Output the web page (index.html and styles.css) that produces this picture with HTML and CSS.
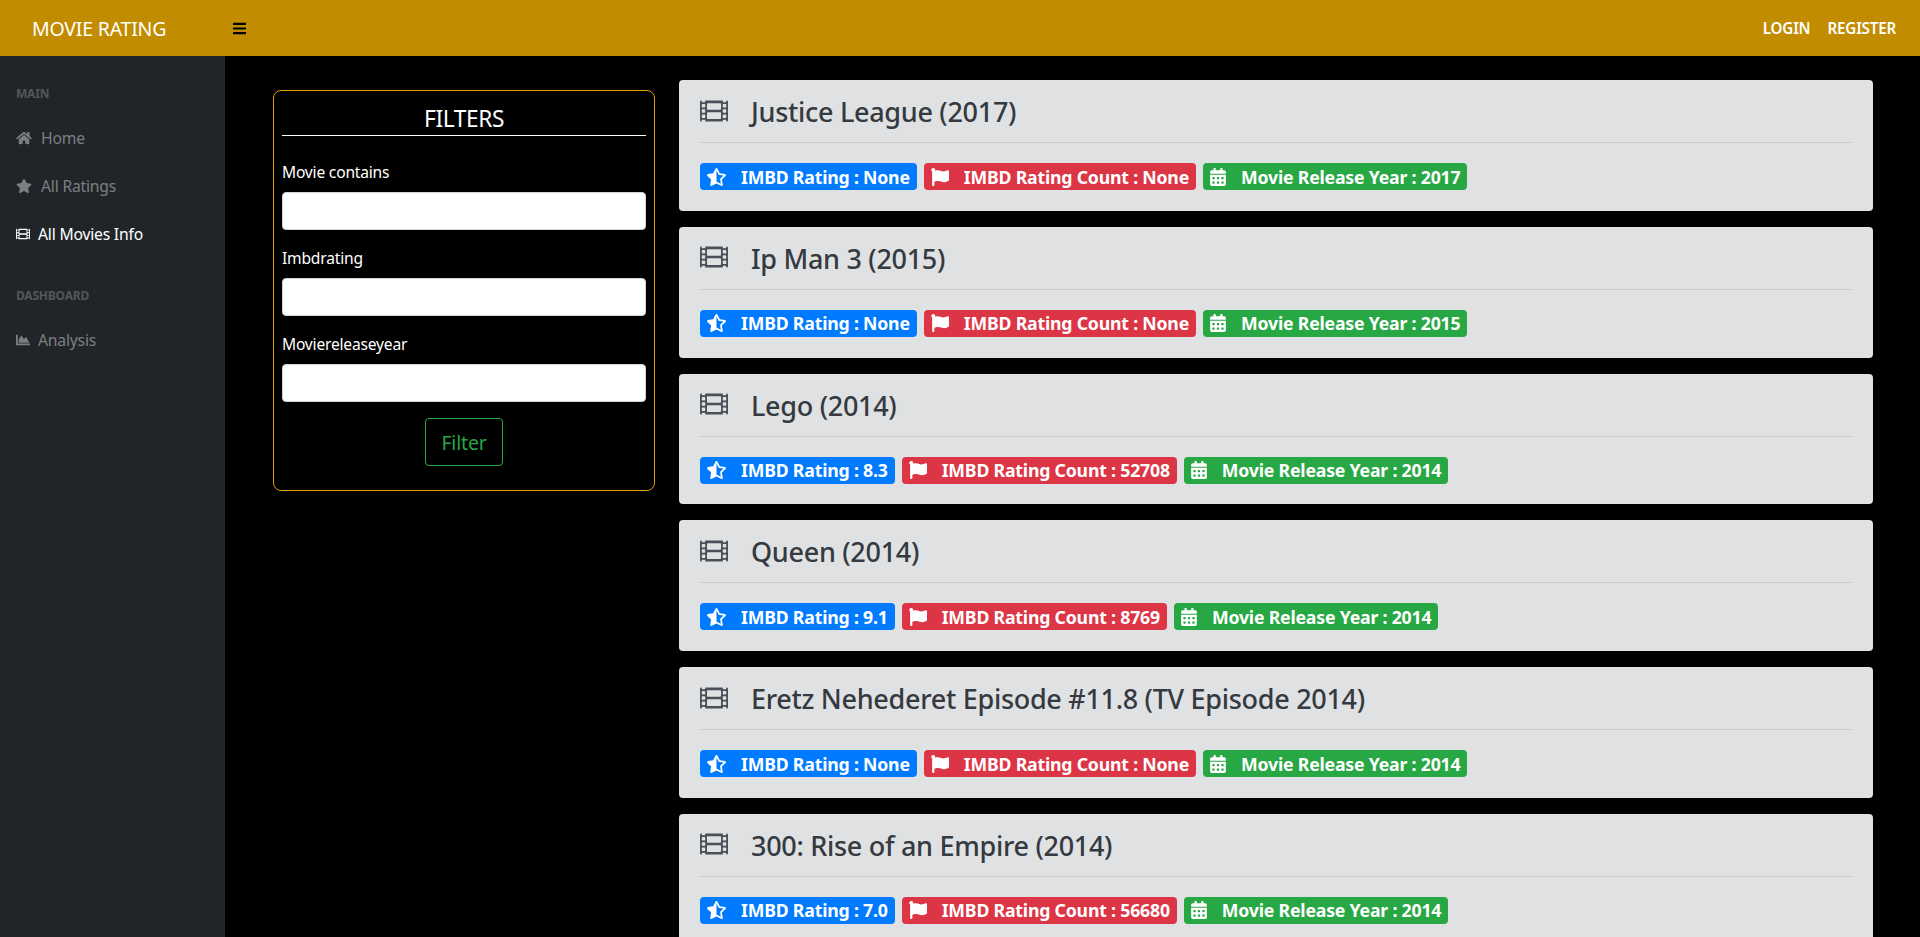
FILE: index.html
```html
<!DOCTYPE html>
<html lang="en">
<head>
    <meta charset="UTF-8">
    <meta name="viewport" content="width=device-width, initial-scale=1.0">
    <title>Movie Rating</title>
    <link rel="stylesheet" href="styles.css">
</head>
<body>

    <svg class="sprites" xmlns="http://www.w3.org/2000/svg">
        <symbol id="i-bars" viewBox="0 0 448 512"><path d="M16 132h416c8.837 0 16-7.163 16-16V76c0-8.837-7.163-16-16-16H16C7.163 60 0 67.163 0 76v40c0 8.837 7.163 16 16 16zm0 160h416c8.837 0 16-7.163 16-16v-40c0-8.837-7.163-16-16-16H16c-8.837 0-16 7.163-16 16v40c0 8.837 7.163 16 16 16zm0 160h416c8.837 0 16-7.163 16-16v-40c0-8.837-7.163-16-16-16H16c-8.837 0-16 7.163-16 16v40c0 8.837 7.163 16 16 16z"/></symbol>
        <symbol id="i-home" viewBox="0 0 576 512"><path d="M280.37 148.26L96 300.11V464a16 16 0 0 0 16 16l112.06-.29a16 16 0 0 0 15.92-16V368a16 16 0 0 1 16-16h64a16 16 0 0 1 16 16v95.64a16 16 0 0 0 16 16.05L464 480a16 16 0 0 0 16-16V300L295.67 148.26a12.19 12.19 0 0 0-15.3 0zM571.6 251.47L488 182.56V44.05a12 12 0 0 0-12-12h-56a12 12 0 0 0-12 12v72.61L318.47 43a48 48 0 0 0-61 0L4.34 251.47a12 12 0 0 0-1.6 16.9l25.5 31A12 12 0 0 0 45.15 301l235.22-193.74a12.19 12.19 0 0 1 15.3 0L530.9 301a12 12 0 0 0 16.9-1.6l25.5-31a12 12 0 0 0-1.7-16.93z"/></symbol>
        <symbol id="i-star" viewBox="0 0 576 512"><path d="M259.3 17.8L194 150.2 47.9 171.5c-26.2 3.8-36.7 36.1-17.7 54.6l105.7 103-25 145.5c-4.5 26.3 23.2 46 46.4 33.7L288 439.6l130.7 68.7c23.2 12.2 50.9-7.4 46.4-33.7l-25-145.5 105.7-103c19-18.5 8.5-50.8-17.7-54.6L382 150.2 316.7 17.8c-11.7-23.6-45.6-23.9-57.4 0z"/></symbol>
        <symbol id="i-film" viewBox="0 0 512 512"><path d="M488 64h-8v20c0 6.6-5.4 12-12 12h-40c-6.6 0-12-5.4-12-12V64H96v20c0 6.6-5.4 12-12 12H44c-6.6 0-12-5.4-12-12V64h-8C10.7 64 0 74.7 0 88v336c0 13.3 10.7 24 24 24h8v-20c0-6.6 5.4-12 12-12h40c6.6 0 12 5.4 12 12v20h320v-20c0-6.6 5.4-12 12-12h40c6.6 0 12 5.4 12 12v20h8c13.3 0 24-10.7 24-24V88c0-13.3-10.7-24-24-24zM96 372c0 6.6-5.4 12-12 12H44c-6.6 0-12-5.4-12-12v-40c0-6.6 5.4-12 12-12h40c6.6 0 12 5.4 12 12v40zm0-96c0 6.6-5.4 12-12 12H44c-6.6 0-12-5.4-12-12v-40c0-6.6 5.4-12 12-12h40c6.6 0 12 5.4 12 12v40zm0-96c0 6.6-5.4 12-12 12H44c-6.6 0-12-5.4-12-12v-40c0-6.6 5.4-12 12-12h40c6.6 0 12 5.4 12 12v40zm288 208c0 6.6-5.4 12-12 12H140c-6.6 0-12-5.4-12-12v-96c0-6.6 5.4-12 12-12h232c6.6 0 12 5.4 12 12v96zm0-168c0 6.6-5.4 12-12 12H140c-6.6 0-12-5.4-12-12v-96c0-6.6 5.4-12 12-12h232c6.6 0 12 5.4 12 12v96zm96 152c0 6.6-5.4 12-12 12h-40c-6.6 0-12-5.4-12-12v-40c0-6.6 5.4-12 12-12h40c6.6 0 12 5.4 12 12v40zm0-96c0 6.6-5.4 12-12 12h-40c-6.6 0-12-5.4-12-12v-40c0-6.6 5.4-12 12-12h40c6.6 0 12 5.4 12 12v40zm0-96c0 6.6-5.4 12-12 12h-40c-6.6 0-12-5.4-12-12v-40c0-6.6 5.4-12 12-12h40c6.6 0 12 5.4 12 12v40z"/></symbol>
        <symbol id="i-chart" viewBox="0 0 512 512"><path d="M500 384c6.6 0 12 5.4 12 12v40c0 6.6-5.4 12-12 12H12c-6.6 0-12-5.4-12-12V76c0-6.6 5.4-12 12-12h40c6.6 0 12 5.4 12 12v308h436zM372.7 159.5L288 216l-85.3-113.7c-5.1-6.8-15.5-6.3-19.9 1L96 248v104h384l-89.9-187.8c-3.2-6.5-11.4-8.7-17.4-4.7z"/></symbol>
        <symbol id="i-star-half" viewBox="0 0 536 512"><path d="M508.55 171.51L362.18 150.2 296.77 17.81C290.89 5.98 279.42 0 267.95 0c-11.4 0-22.79 5.9-28.69 17.81l-65.43 132.38-146.38 21.29c-26.25 3.8-36.77 36.09-17.74 54.59l105.89 103-25.06 145.48C86.98 495.33 103.57 512 122.15 512c4.93 0 10-1.17 14.87-3.75l130.95-68.68 130.94 68.7c4.86 2.55 9.92 3.71 14.83 3.71 18.6 0 35.22-16.61 31.66-37.4l-25.03-145.49 105.91-102.98c19.04-18.5 8.52-50.8-17.73-54.6zm-121.74 123.2l-18.12 17.62 4.28 24.88 19.52 113.45-102.13-53.59-22.38-11.74.03-317.19 51.03 103.29 11.18 22.63 25.01 3.64 114.23 16.63-82.65 80.38z"/></symbol>
        <symbol id="i-flag" viewBox="0 0 512 512"><path d="M349.565 98.783C295.978 98.783 251.721 64 184.348 64c-24.955 0-47.309 4.384-68.045 12.013a55.947 55.947 0 0 0 3.586-23.562C118.117 24.015 94.806 1.206 66.338.048 34.345-1.254 8 24.296 8 56c0 19.026 9.497 35.825 24 45.945V488c0 13.255 10.745 24 24 24h16c13.255 0 24-10.745 24-24v-94.4c28.311-12.064 63.582-22.122 114.435-22.122 53.588 0 97.844 34.783 165.217 34.783 48.169 0 86.667-16.294 122.505-40.858C506.84 359.452 512 349.571 512 339.045v-243.1c0-23.393-24.269-38.87-45.485-29.016-34.338 15.948-76.454 31.854-116.95 31.854z"/></symbol>
        <symbol id="i-calendar" viewBox="0 0 448 512"><path d="M0 464c0 26.5 21.5 48 48 48h352c26.5 0 48-21.5 48-48V192H0v272zm320-196c0-6.6 5.4-12 12-12h40c6.6 0 12 5.4 12 12v40c0 6.6-5.4 12-12 12h-40c-6.6 0-12-5.4-12-12v-40zm0 128c0-6.6 5.4-12 12-12h40c6.6 0 12 5.4 12 12v40c0 6.6-5.4 12-12 12h-40c-6.6 0-12-5.4-12-12v-40zM192 268c0-6.6 5.4-12 12-12h40c6.6 0 12 5.4 12 12v40c0 6.6-5.4 12-12 12h-40c-6.6 0-12-5.4-12-12v-40zm0 128c0-6.6 5.4-12 12-12h40c6.6 0 12 5.4 12 12v40c0 6.6-5.4 12-12 12h-40c-6.6 0-12-5.4-12-12v-40zM64 268c0-6.6 5.4-12 12-12h40c6.6 0 12 5.4 12 12v40c0 6.6-5.4 12-12 12H76c-6.6 0-12-5.4-12-12v-40zm0 128c0-6.6 5.4-12 12-12h40c6.6 0 12 5.4 12 12v40c0 6.6-5.4 12-12 12H76c-6.6 0-12-5.4-12-12v-40zM400 64h-48V16c0-8.8-7.2-16-16-16h-32c-8.8 0-16 7.2-16 16v48H160V16c0-8.8-7.2-16-16-16h-32c-8.8 0-16 7.2-16 16v48H48C21.5 64 0 85.5 0 112v48h448v-48c0-26.5-21.5-48-48-48z"/></symbol>
    </svg>

    <header class="topbar">
        <a class="brand" href="#">MOVIE RATING</a>
        <button class="toggle" type="button" aria-label="Toggle sidebar"><svg class="icon"><use href="#i-bars"/></svg></button>
        <nav class="topnav">
            <a href="#">LOGIN</a>
            <a href="#">REGISTER</a>
        </nav>
    </header>

    <div class="layout">
        <aside class="sidebar">
            <div class="side-heading">MAIN</div>
            <a class="side-link" href="#"><svg class="icon wide"><use href="#i-home"/></svg>Home</a>
            <a class="side-link" href="#"><svg class="icon wide"><use href="#i-star"/></svg>All Ratings</a>
            <a class="side-link active" href="#"><svg class="icon"><use href="#i-film"/></svg>All Movies Info</a>
            <div class="side-heading second">DASHBOARD</div>
            <a class="side-link" href="#"><svg class="icon"><use href="#i-chart"/></svg>Analysis</a>
        </aside>

        <main class="content">
            <div class="filters-col">
                <form class="filters">
                    <h4>FILTERS</h4>
                    <label for="movie">Movie contains</label>
                    <input id="movie" type="text">
                    <label for="imdb">Imbdrating</label>
                    <input id="imdb" type="text">
                    <label for="year">Moviereleaseyear</label>
                    <input id="year" type="text">
                    <button class="filter-btn" type="button">Filter</button>
                </form>
            </div>

            <div class="movies">
                <div class="movie">
                    <h3><svg class="icon"><use href="#i-film"/></svg><span>Justice League (2017)</span></h3>
                    <hr>
                    <div class="badges">
                        <span class="badge blue"><svg class="icon"><use href="#i-star-half"/></svg>IMBD Rating : None</span>
                        <span class="badge red"><svg class="icon"><use href="#i-flag"/></svg>IMBD Rating Count : None</span>
                        <span class="badge green"><svg class="icon"><use href="#i-calendar"/></svg>Movie Release Year : 2017</span>
                    </div>
                </div>
                <div class="movie">
                    <h3><svg class="icon"><use href="#i-film"/></svg><span>Ip Man 3 (2015)</span></h3>
                    <hr>
                    <div class="badges">
                        <span class="badge blue"><svg class="icon"><use href="#i-star-half"/></svg>IMBD Rating : None</span>
                        <span class="badge red"><svg class="icon"><use href="#i-flag"/></svg>IMBD Rating Count : None</span>
                        <span class="badge green"><svg class="icon"><use href="#i-calendar"/></svg>Movie Release Year : 2015</span>
                    </div>
                </div>
                <div class="movie">
                    <h3><svg class="icon"><use href="#i-film"/></svg><span>Lego (2014)</span></h3>
                    <hr>
                    <div class="badges">
                        <span class="badge blue"><svg class="icon"><use href="#i-star-half"/></svg>IMBD Rating : 8.3</span>
                        <span class="badge red"><svg class="icon"><use href="#i-flag"/></svg>IMBD Rating Count : 52708</span>
                        <span class="badge green"><svg class="icon"><use href="#i-calendar"/></svg>Movie Release Year : 2014</span>
                    </div>
                </div>
                <div class="movie">
                    <h3><svg class="icon"><use href="#i-film"/></svg><span>Queen (2014)</span></h3>
                    <hr>
                    <div class="badges">
                        <span class="badge blue"><svg class="icon"><use href="#i-star-half"/></svg>IMBD Rating : 9.1</span>
                        <span class="badge red"><svg class="icon"><use href="#i-flag"/></svg>IMBD Rating Count : 8769</span>
                        <span class="badge green"><svg class="icon"><use href="#i-calendar"/></svg>Movie Release Year : 2014</span>
                    </div>
                </div>
                <div class="movie">
                    <h3><svg class="icon"><use href="#i-film"/></svg><span>Eretz Nehederet Episode #11.8 (TV Episode 2014)</span></h3>
                    <hr>
                    <div class="badges">
                        <span class="badge blue"><svg class="icon"><use href="#i-star-half"/></svg>IMBD Rating : None</span>
                        <span class="badge red"><svg class="icon"><use href="#i-flag"/></svg>IMBD Rating Count : None</span>
                        <span class="badge green"><svg class="icon"><use href="#i-calendar"/></svg>Movie Release Year : 2014</span>
                    </div>
                </div>
                <div class="movie">
                    <h3><svg class="icon"><use href="#i-film"/></svg><span>300: Rise of an Empire (2014)</span></h3>
                    <hr>
                    <div class="badges">
                        <span class="badge blue"><svg class="icon"><use href="#i-star-half"/></svg>IMBD Rating : 7.0</span>
                        <span class="badge red"><svg class="icon"><use href="#i-flag"/></svg>IMBD Rating Count : 56680</span>
                        <span class="badge green"><svg class="icon"><use href="#i-calendar"/></svg>Movie Release Year : 2014</span>
                    </div>
                </div>
            </div>
        </main>
    </div>

</body>
</html>
```

FILE: styles.css
```css
* {
    box-sizing: border-box;
}

html, body {
    height: 100%;
}

body {
    margin: 0;
    display: flex;
    flex-direction: column;
    overflow: hidden;
    background-color: #000;
    color: #fff;
    font-family: "Noto Sans", "Open Sans", sans-serif;
    font-size: 15px;
}

a {
    text-decoration: none;
    color: inherit;
}

.sprites {
    display: none;
}

.icon {
    display: block;
    flex: none;
    fill: currentColor;
}

/* top bar */
.topbar {
    flex: none;
    height: 56px;
    display: flex;
    align-items: center;
    background-color: #c28c00;
}

.brand {
    width: 225px;
    padding-left: 32px;
    font-size: 19.5px;
    letter-spacing: -0.2px;
}

.toggle {
    padding: 0;
    margin-left: 8px;
    border: none;
    background: none;
    color: #000;
}

.toggle .icon {
    width: 13px;
    height: 15px;
}

.topnav {
    margin-left: auto;
    padding-right: 24px;
    display: flex;
    gap: 17px;
    font-size: 15.2px;
    font-weight: 600;
    letter-spacing: -0.2px;
}

/* sidebar */
.layout {
    flex: 1;
    display: flex;
    min-height: 0;
}

.sidebar {
    flex: none;
    width: 225px;
    padding: 30px 16px 0;
    background-color: #212529;
    color: #7c7f82;
}

.side-heading {
    height: 16px;
    line-height: 16px;
    font-size: 12px;
    font-weight: 700;
    color: #53565a;
    letter-spacing: -0.2px;
}

.side-heading.second {
    margin-top: 30px;
}

.side-link {
    display: flex;
    align-items: center;
    gap: 8px;
    height: 48px;
    font-size: 15.7px;
    letter-spacing: -0.2px;
}

.side-heading + .side-link {
    margin-top: 12px;
}

.side-link.active {
    color: #fff;
}

.side-link .icon {
    width: 14px;
    height: 14px;
}

.side-link .icon.wide {
    width: 16px;
    margin-right: 1px;
}

/* main area */
.content {
    flex: 1;
    min-width: 0;
    padding: 24px 47px 0 48px;
    display: flex;
    gap: 24px;
}

.filters-col {
    flex: none;
    width: 382px;
    padding-top: 10px;
}

.filters {
    height: 401px;
    padding: 8px;
    display: flex;
    flex-direction: column;
    border: 1px solid #e09f00;
    border-radius: 8px;
}

.filters h4 {
    margin: 0 0 24px;
    padding-top: 4px;
    border-bottom: 1px solid #fff;
    text-align: center;
    font-size: 22.7px;
    font-weight: 400;
    line-height: 32px;
    letter-spacing: -0.4px;
}

.filters label {
    height: 24px;
    line-height: 24px;
    margin-bottom: 8px;
    font-size: 15.6px;
    letter-spacing: -0.2px;
}

.filters input {
    display: block;
    width: 100%;
    height: 38px;
    margin-bottom: 16px;
    padding: 6px 12px;
    border: 1px solid #ced4da;
    border-radius: 4px;
    background-color: #fff;
}

.filter-btn {
    align-self: center;
    width: 78px;
    height: 48px;
    border: 1px solid #28a745;
    border-radius: 4px;
    background: none;
    color: #28a745;
    font-family: inherit;
    font-size: 19.5px;
    letter-spacing: -0.2px;
}

.movies {
    flex: 1;
    min-width: 0;
}

.movie {
    height: 130.8px;
    margin-bottom: 16px;
    padding: 15px 21px 0;
    border-radius: 4px;
    background-color: #e0e1e3;
    color: #343a40;
}

.movie h3 {
    margin: 0;
    height: 31px;
    display: flex;
    align-items: center;
    gap: 23px;
    font-size: 27px;
    font-weight: 500;
    letter-spacing: -0.3px;
}

.movie h3 span {
    margin-top: 2px;
}

.movie h3 .icon {
    width: 28px;
    height: 28px;
    color: #495057;
}

.movie hr {
    margin: 16px 0 20px;
    border: none;
    border-top: 1px solid #cbccce;
}

.badges {
    display: flex;
    gap: 7px;
}

.badge {
    display: flex;
    align-items: center;
    height: 27px;
    padding: 0 7px;
    gap: 15px;
    border-radius: 4px;
    color: #fff;
    font-size: 17.7px;
    font-weight: 700;
    letter-spacing: -0.2px;
}

.badge .icon {
    width: 18px;
    height: 18px;
}

.blue {
    background-color: #007bff;
}

.blue .icon {
    width: 19px;
}

.red {
    background-color: #dc3545;
}

.green {
    background-color: #28a745;
}

.green .icon {
    width: 16px;
}
```
